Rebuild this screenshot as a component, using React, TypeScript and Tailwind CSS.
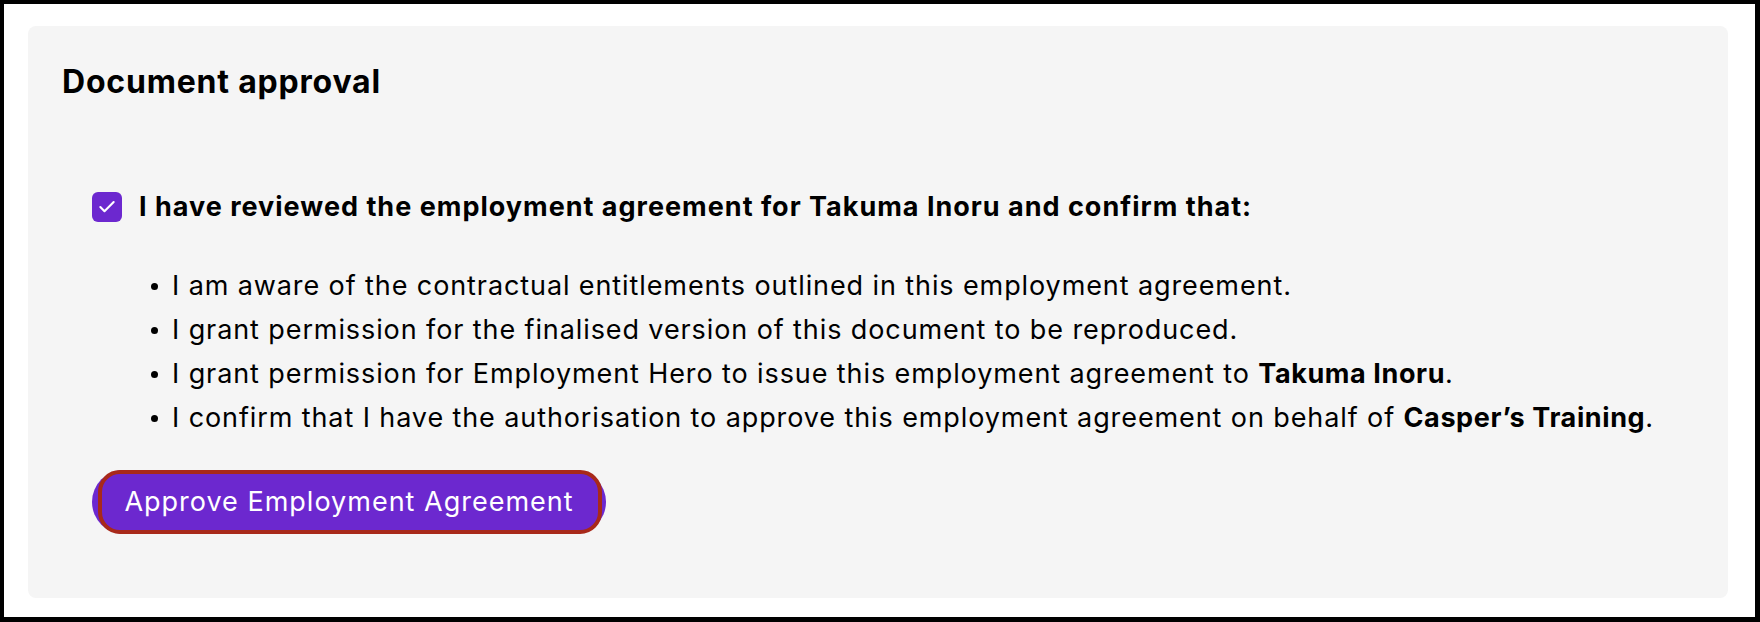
import { Check } from 'lucide-react'

const ITEMS: { text: string; bold?: string; tail?: string }[] = [
  { text: 'I am aware of the contractual entitlements outlined in this employment agreement.' },
  { text: 'I grant permission for the finalised version of this document to be reproduced.' },
  { text: 'I grant permission for Employment Hero to issue this employment agreement to ', bold: 'Takuma Inoru', tail: '.' },
  { text: 'I confirm that I have the authorisation to approve this employment agreement on behalf of ', bold: "Casper\u2019s Training", tail: '.' },
]

export default function App() {
  return (
    <div className="h-[622px] w-[1760px] bg-white border-black border-l-4 border-t-4 border-r-[5px] border-b-[5px] pl-[24px] pt-[22px] pr-[27px] pb-[19px] font-['Inter',sans-serif] text-black">
      <div className="h-full rounded-lg bg-[#f5f5f5] px-[34px] pt-[37px]">
        {/* Title */}
        <h2 className="text-[32px] font-bold leading-[38px] tracking-[0.8px]">Document approval</h2>

        <div className="ml-[30px] mt-[90px]">
          {/* Confirm checkbox */}
          <label className="flex items-center gap-[17px]">
            <span className="flex h-[30px] w-[30px] items-center justify-center rounded-[6px] bg-[#6c28cf]">
              <Check className="h-[20px] w-[20px] text-white" strokeWidth={2.5} />
            </span>
            <span className="text-[27px] font-bold leading-[32px] tracking-[1px]">
              I have reviewed the employment agreement for Takuma Inoru and confirm that:
            </span>
          </label>

          {/* Terms */}
          <ul className="mt-[41px] pl-[59px] text-[27px] leading-[44px] tracking-[0.9px]">
            {ITEMS.map((it, i) => (
              <li key={i} className="flex items-center gap-[14px]">
                <span className="h-[7px] w-[7px] shrink-0 rounded-full bg-black" />
                <span>
                  {it.text}
                  {it.bold && <strong className="font-bold tracking-[0.6px]">{it.bold}</strong>}
                  {it.tail}
                </span>
              </li>
            ))}
          </ul>

          {/* Approve button */}
          <button className="relative mt-[30px] flex h-[64px] w-[514px] items-center justify-center rounded-full bg-[#6c28cf] text-[27px] tracking-[1px] text-white">
            <span className="absolute inset-y-0 left-[6px] right-[4px] rounded-[22px] border-4 border-[#a8291a]" />
            <span className="relative">Approve Employment Agreement</span>
          </button>
        </div>
      </div>
    </div>
  )
}
